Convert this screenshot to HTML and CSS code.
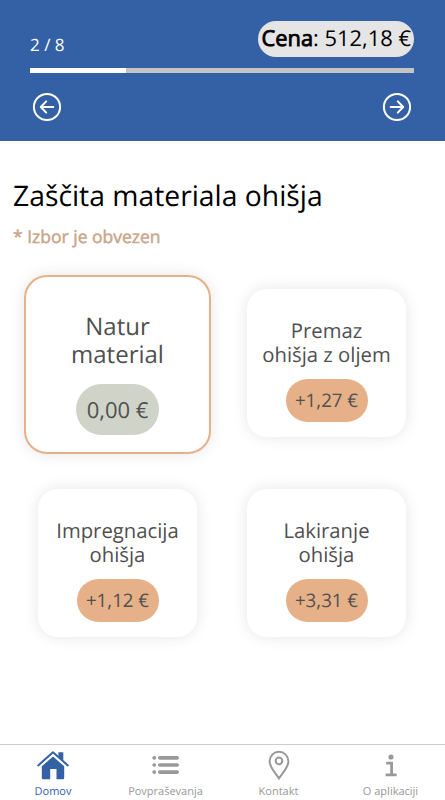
FILE: index.html
```html
<!DOCTYPE html>
<html lang="sl">
<head>
<meta charset="UTF-8" />
<meta name="viewport" content="width=device-width,initial-scale=1" />
<title>Zaščita materiala ohišja</title>
<link rel="stylesheet" href="styles.css">
</head>

<body>
<div id="app">
  <header class="top">
    <div class="topRow">
      <span class="step">2 / 8</span>
      <span class="total"><b>Cena</b>: 512,18 €</span>
    </div>
    <div class="progress"><div class="bar" style="width:25%"></div></div>
    <div class="arrows">
      <button class="arrowBtn" aria-label="Nazaj">
        <svg viewBox="0 0 30 30"><circle cx="15" cy="15" r="13.1"/><path d="M21.3 15H9.3M14.2 9.4L8.8 15l5.4 5.6"/></svg>
      </button>
      <button class="arrowBtn" aria-label="Naprej">
        <svg viewBox="0 0 30 30"><circle cx="15" cy="15" r="13.1"/><path d="M8.7 15h12M15.8 9.4l5.4 5.6-5.4 5.6"/></svg>
      </button>
    </div>
  </header>

  <main>
    <h1>Zaščita materiala ohišja</h1>
    <p class="required">* Izbor je obvezen</p>

    <div class="options">
      <div class="card selected">
        <div class="name">Natur<br>material</div>
        <span class="price">0,00 €</span>
      </div>
      <div class="card">
        <div class="name">Premaz<br>ohišja z oljem</div>
        <span class="price">+1,27 €</span>
      </div>
      <div class="card">
        <div class="name">Impregnacija<br>ohišja</div>
        <span class="price">+1,12 €</span>
      </div>
      <div class="card">
        <div class="name">Lakiranje<br>ohišja</div>
        <span class="price">+3,31 €</span>
      </div>
    </div>
  </main>

  <nav class="tabs">
    <a class="tab active">
      <svg viewBox="0 0 32 30"><path class="fill" d="M16 6.4L27.2 16.3v11.4q0 1.5-1.5 1.5h-6.2V19h-6.3v10.2H6.3q-1.5 0-1.5-1.5V16.3zM21.4 2.2h4.9v8.4l-4.9-4.3z"/><path class="roof" d="M1.2 15.4L16 2.3l14.8 13.1"/></svg>
      <span>Domov</span>
    </a>
    <a class="tab">
      <svg viewBox="0 0 32 30"><path class="list" d="M9.8 7.9H27.2M9.8 15H27.2M9.8 22.1H27.2"/><path class="list" d="M4.1 7.9h.3M4.1 15h.3M4.1 22.1h.3"/></svg>
      <span>Povpraševanja</span>
    </a>
    <a class="tab">
      <svg viewBox="0 0 32 30"><path class="pin" d="M16 28.4C13.2 24 6.6 17.5 6.6 11.3a9.4 9.5 0 0 1 18.8 0c0 6.2-6.6 12.7-9.4 17.1z"/><circle class="pin" cx="16" cy="10.9" r="3.3"/></svg>
      <span>Kontakt</span>
    </a>
    <a class="tab">
      <svg viewBox="0 0 32 30"><circle class="fill" cx="16" cy="7" r="2.6"/><path class="info" d="M11.2 13.2h5.4v11.4M10.6 24.9h11"/></svg>
      <span>O aplikaciji</span>
    </a>
  </nav>
</div>
</body>
</html>
```
FILE: styles.css
```css
/* ---------- reset ---------- */
*
{
  box-sizing:border-box;
  margin:0;
  padding:0;
}
body
{
  background:#fff;
  font-family:"Open Sans","Noto Sans",sans-serif;
  color:#000;
  text-rendering:geometricPrecision;
}
#app
{
  display:flex;
  flex-direction:column;
  height:100vh;
  overflow:hidden;
}

/* ===== header ===== */
.top
{
  height:140.5px;
  padding:21px 31px 0 30px;
  background:#3461a6;
}
.topRow
{
  display:flex;
  justify-content:space-between;
  height:47px;
}
.step
{
  padding-top:12px;
  font-size:17px;
  line-height:23px;
  color:#fff;
}
.total
{
  height:36px;
  padding:0 3px;
  border-radius:18px;
  background:#e5e5e5;
  font-size:21.9px;
  line-height:36px;
  white-space:nowrap;
}
.total b
{
  font-weight:400;
  -webkit-text-stroke:.8px #000;
}
.progress
{
  height:5px;
  background:#c4c4c4;
}
.bar
{
  height:100%;
  background:#fff;
}
.arrows
{
  display:flex;
  justify-content:space-between;
  padding:19px 2px 0;
}
.arrowBtn
{
  width:30px;
  height:30px;
  border:none;
  background:transparent;
}
.arrowBtn svg
{
  display:block;
  fill:none;
  stroke:#fff;
  stroke-width:2;
  stroke-linecap:round;
  stroke-linejoin:round;
}

/* ===== content ===== */
main
{
  flex:1;
  padding-top:35px;
}
h1
{
  padding-left:13px;
  font-size:28.3px;
  font-weight:400;
  line-height:40px;
}
.required
{
  padding:9px 0 0 13px;
  font-size:17.5px;
  line-height:24px;
  color:#c9a78c;
  -webkit-text-stroke:.5px #c9a78c;
}
.options
{
  display:grid;
  grid-template-columns:159px 159px;
  grid-auto-rows:148px;
  gap:52px 50px;
  padding:40px 0 0 38px;
}
.card
{
  display:flex;
  flex-direction:column;
  align-items:center;
  padding-top:29px;
  border-radius:20px;
  background:#fff;
  box-shadow:0 0 15px rgba(0,0,0,.1);
  color:#505050;
}
.name
{
  font-size:20.3px;
  line-height:24px;
  text-align:center;
  white-space:nowrap;
}
.price
{
  width:82px;
  height:43px;
  margin-top:13px;
  border-radius:22px;
  background:#e6b088;
  font-size:18.7px;
  line-height:44px;
  text-align:center;
  white-space:nowrap;
}
.selected
{
  margin:-13.5px -14px -17px;
  padding-top:36px;
  border:2px solid #e6b088;
  border-radius:23px;
}
.selected .name
{
  font-size:24px;
  line-height:28px;
}
.selected .price
{
  width:83px;
  height:51px;
  margin-top:15px;
  border-radius:26px;
  background:#d0d3c8;
  font-size:22px;
  line-height:52px;
}

/* ===== bottom tabs ===== */
.tabs
{
  display:grid;
  grid-template-columns:106px 119px 107px 117px;
  height:56px;
  padding-top:5px;
  border-top:1px solid #ccc;
}
.tab
{
  display:flex;
  flex-direction:column;
  align-items:center;
  font-size:11px;
  line-height:16px;
  color:#999;
}
.tab svg
{
  width:32px;
  height:30px;
  margin-bottom:4px;
}
.active{color:#3461a6;}
.fill{fill:currentColor;}
.roof,.list,.pin,.info
{
  fill:none;
  stroke:currentColor;
  stroke-width:2;
}
.roof
{
  stroke-linecap:round;
  stroke-linejoin:round;
}
.list
{
  stroke-width:3.6;
  stroke-linecap:round;
}
.info{stroke-width:2.8;}
```
